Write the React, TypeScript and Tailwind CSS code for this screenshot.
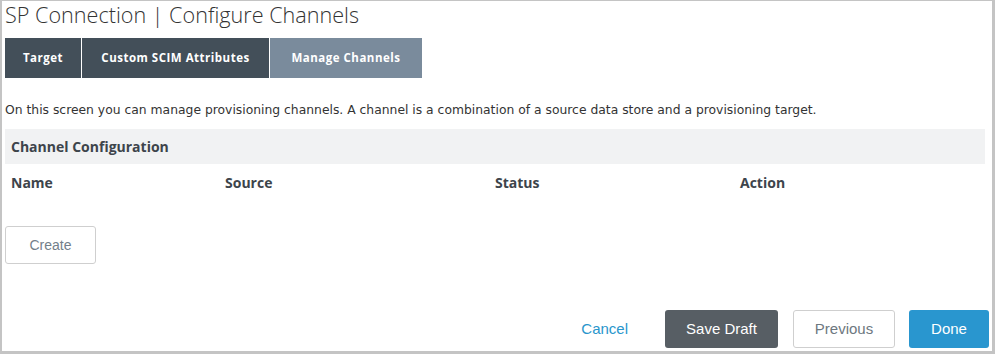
export default function App() {
  const tabs = [
    { label: "Target", w: "w-[76px]", active: false },
    { label: "Custom SCIM Attributes", w: "w-[187px]", active: false },
    { label: "Manage Channels", w: "w-[152px]", active: true },
  ];

  return (
    <div className="w-[995px] h-[354px] bg-white border-l-2 border-r-[3px] border-b-[3px] border-t border-[#c4c4c4] box-border overflow-hidden font-['Open_Sans',sans-serif]">
      <div className="pl-[3px] pr-[3px]">
        {/* title */}
        <h1 className="h-[37px] text-[21.6px] leading-[28px] font-light text-[#333]">
          SP Connection | Configure Channels
        </h1>

        {/* tabs */}
        <div className="flex gap-px">
          {tabs.map((t) => (
            <div
              key={t.label}
              className={`${t.w} h-10 flex items-center justify-center text-[11.5px] font-bold tracking-[0.5px] text-white ${
                t.active ? "bg-[#7a8b9c]" : "bg-[#434f59]"
              }`}
            >
              {t.label}
            </div>
          ))}
        </div>

        <p className="mt-[23px] text-[12.35px] leading-[18px] text-[#333] font-['DejaVu_Sans',sans-serif]">
          On this screen you can manage provisioning channels. A channel is a combination of a source data store and a provisioning target.
        </p>

        <div className="mt-[10px] w-[980px] h-[35px] bg-[#f1f2f3] flex items-center pl-[6px] text-[14px] font-bold text-[#3d444b]">
          Channel Configuration
        </div>

        <div className="flex h-9 items-center pt-[1px] pl-[6px] text-[14px] font-bold text-[#3d444b]">
          <div className="w-[214px]">Name</div>
          <div className="w-[270px]">Source</div>
          <div className="w-[245px]">Status</div>
          <div>Action</div>
        </div>

        <button className="mt-[26px] w-[91px] h-[38px] border border-[#cfcfcf] rounded-[3px] text-[14px] text-[#737f8b] font-['Liberation_Sans',sans-serif]">
          Create
        </button>

        <div className="mt-[46px] flex items-center justify-end gap-[14px] font-['Liberation_Sans',sans-serif] text-[15px]">
          <button className="mr-[23px] text-[#2996cc]">Cancel</button>
          <button className="w-[113px] h-[38px] rounded-[3px] bg-[#575e64] text-white">
            Save Draft
          </button>
          <button className="ml-[1px] w-[102px] h-[38px] rounded-[3px] border border-[#cfcfcf] text-[#6d7880]">
            Previous
          </button>
          <button className="w-[80px] h-[38px] rounded-[3px] bg-[#2996cf] text-white">
            Done
          </button>
        </div>
      </div>
    </div>
  );
}
